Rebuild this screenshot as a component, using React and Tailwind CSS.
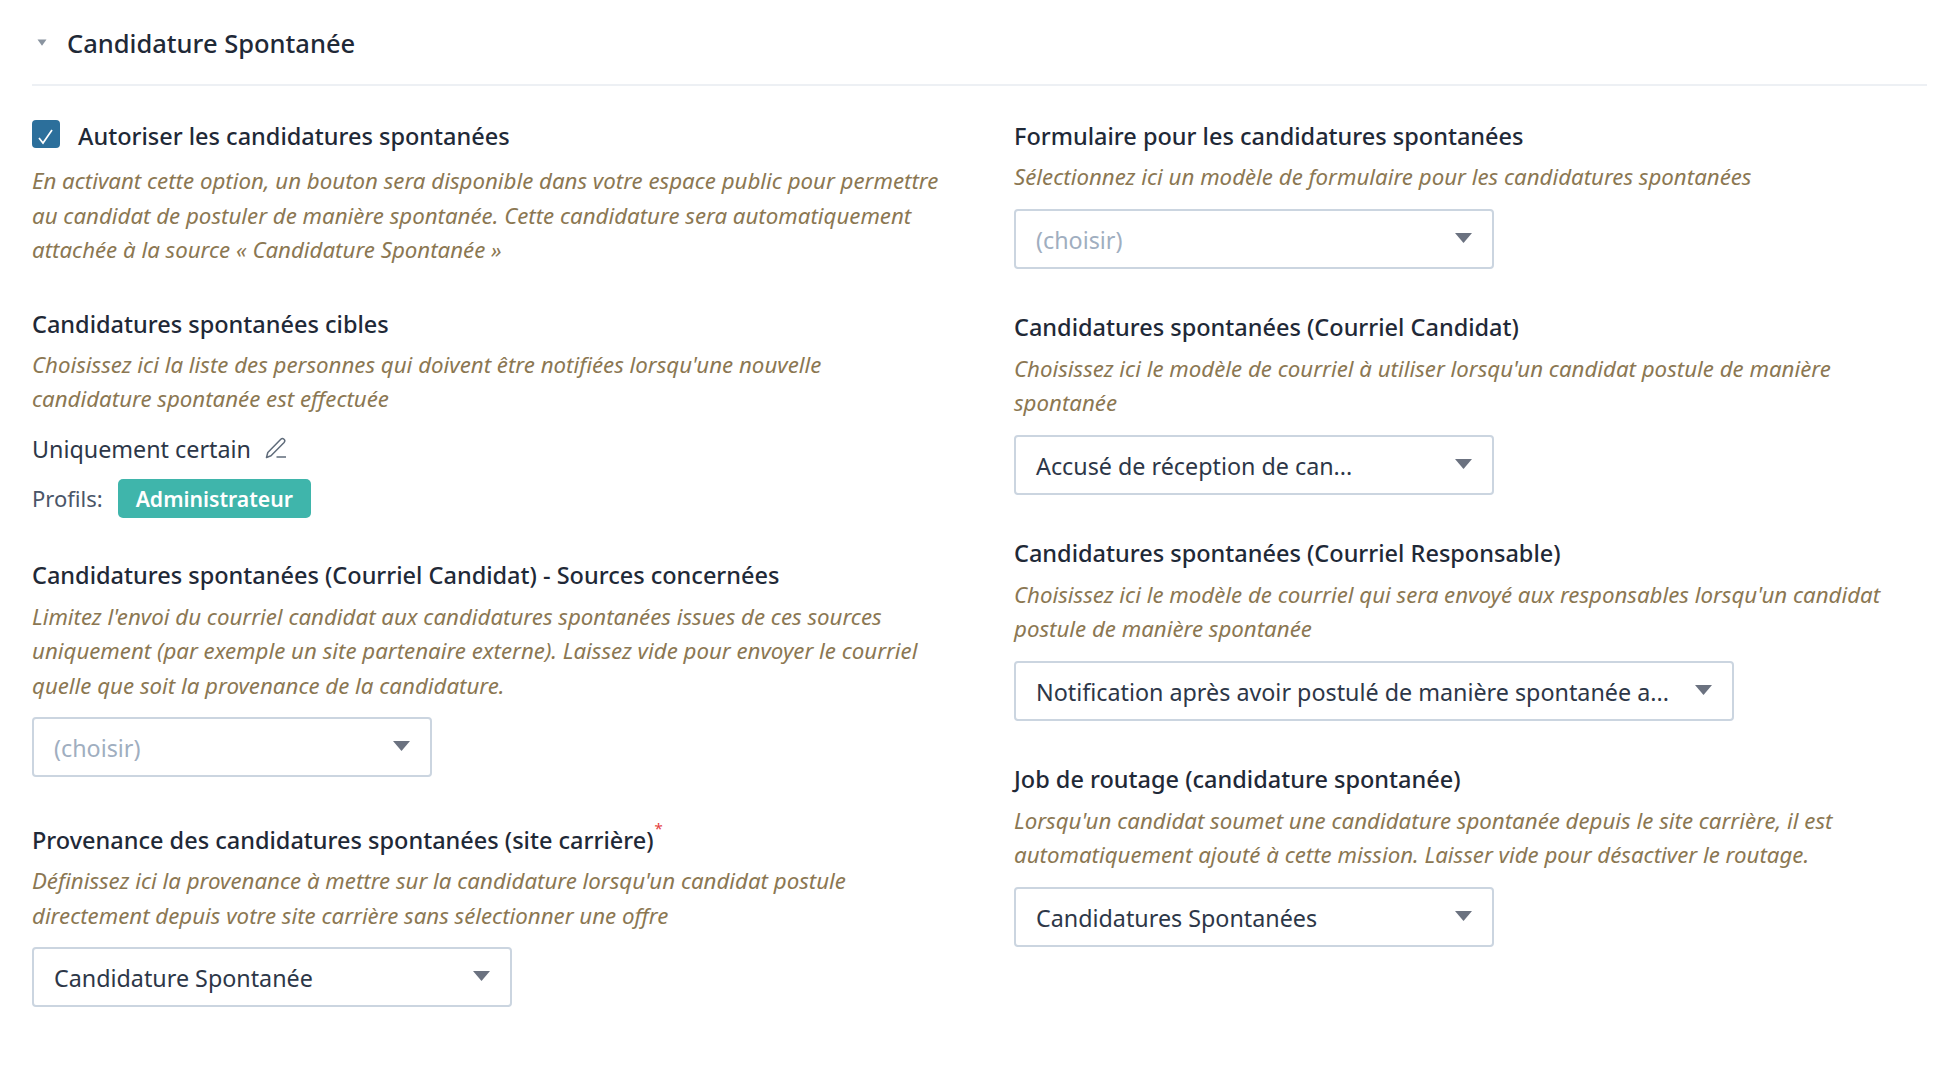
import React from "react";

function Field({ title, desc, required, descGap = "mt-[7px]", className = "", children }) {
  return (
    <div className={className}>
      <div className="text-[23.5px] leading-[34px] font-medium text-[#1f2937]">
        {title}
        {required && <sup className="ml-[1px] align-[8px] text-[15px] font-normal text-[#e53e3e]">*</sup>}
      </div>
      <p className={`${descGap} text-[22.25px] leading-[34.5px] italic text-[#8b7752]`}>{desc}</p>
      {children}
    </div>
  );
}

function Select({ value, placeholder, width }) {
  return (
    <div
      className={`mt-[14px] flex h-[60px] items-center justify-between rounded-[4px] border-2 border-[#cbd5e0] bg-white pl-[20px] pr-[18px] ${width}`}
    >
      <span className={`pt-[3px] text-[23.3px] ${placeholder ? "text-[#a0aec0]" : "text-[#2d3748]"}`}>{value}</span>
      <svg width="20" height="12" viewBox="0 0 20 12" className="mb-[2px] shrink-0">
        <path d="M1 1h17l-8.500 10z" fill="#6b7280" />
      </svg>
    </div>
  );
}

export default function App() {
  return (
    <div className="min-h-[1090px] bg-white pl-[32px] pr-[33px] font-['Noto_Sans','Open_Sans',sans-serif] text-[#1f2937]">
      <div className="flex h-[86px] items-center border-b-2 border-[#edf0f4]">
        <svg width="10" height="7" viewBox="0 0 10 7" className="ml-[5px] mr-[20px]">
          <path d="M0.500 0.500h9L5 6.800z" fill="#8a94a0" />
        </svg>
        <span className="pt-[2px] text-[25.5px] font-medium text-[#1f2937]">Candidature Spontanée</span>
      </div>
      <div className="grid grid-cols-2 gap-x-[69px] pt-[33px]">
        <div className="flex flex-col">
          <div>
            <div className="flex items-center">
              <span className="mb-[4px] flex h-[28px] w-[28px] items-center justify-center rounded-[4px] bg-[#2c6f9b]">
                <svg width="28" height="28" viewBox="0 0 28 28" fill="none" stroke="white" strokeWidth="1.700">
                  <path d="M7 18l4 5L20 10" />
                </svg>
              </span>
              <span className="ml-[18px] text-[23.5px] leading-[34px] font-medium">Autoriser les candidatures spontanées</span>
            </div>
            <p className="mt-[11px] text-[22.25px] leading-[34.5px] italic text-[#8b7752]">
              En activant cette option, un bouton sera disponible dans votre espace public pour permettre au candidat de postuler de manière spontanée. Cette candidature sera automatiquement attachée à la source « Candidature Spontanée »
            </p>
          </div>
          <Field
            className="mt-[39px]"
            title="Candidatures spontanées cibles"
            desc="Choisissez ici la liste des personnes qui doivent être notifiées lorsqu'une nouvelle candidature spontanée est effectuée"
          >
            <div className="mt-[12px] flex items-center text-[23.3px] leading-[40px] text-[#2d3748]">
              Uniquement certain
              <svg width="22" height="22" viewBox="0 0 22 22" fill="none" stroke="#5f6b7a" strokeWidth="1.500" className="ml-[14px] mb-[2px]">
                <path d="M1.500 20.500L2.800 15.500L15.800 2.200a2.300 2.300 0 0 1 3.300 3.200L6 18.800Z" strokeLinejoin="round" />
                <path d="M11.500 20h9.500" />
              </svg>
            </div>
            <div className="mt-[10px] flex items-center text-[22px] text-[#4a5568]">
              Profils:
              <span className="ml-[15px] flex h-[39px] items-center rounded-[5px] bg-[#3fb5ab] px-[18px] pt-[1px] text-[21.200px] font-semibold text-white">Administrateur</span>
            </div>
          </Field>
          <Field
            className="mt-[40px]"
            descGap="mt-[8px]"
            title="Candidatures spontanées (Courriel Candidat) - Sources concernées"
            desc="Limitez l'envoi du courriel candidat aux candidatures spontanées issues de ces sources uniquement (par exemple un site partenaire externe). Laissez vide pour envoyer le courriel quelle que soit la provenance de la candidature."
          >
            <Select value="(choisir)" placeholder width="w-[400px]" />
          </Field>
          <Field
            className="mt-[46px]"
            title="Provenance des candidatures spontanées (site carrière)"
            required
            desc="Définissez ici la provenance à mettre sur la candidature lorsqu'un candidat postule directement depuis votre site carrière sans sélectionner une offre"
          >
            <Select value="Candidature Spontanée" width="w-[480px]" />
          </Field>
        </div>
        <div className="flex flex-col gap-[41px]">
          <Field
            descGap="mt-[7px]"
            title="Formulaire pour les candidatures spontanées"
            desc="Sélectionnez ici un modèle de formulaire pour les candidatures spontanées"
          >
            <Select value="(choisir)" placeholder width="w-[480px]" />
          </Field>
          <Field
            descGap="mt-[8px]"
            title="Candidatures spontanées (Courriel Candidat)"
            desc="Choisissez ici le modèle de courriel à utiliser lorsqu'un candidat postule de manière spontanée"
          >
            <Select value="Accusé de réception de can..." width="w-[480px]" />
          </Field>
          <Field
            descGap="mt-[8px]"
            title="Candidatures spontanées (Courriel Responsable)"
            desc="Choisissez ici le modèle de courriel qui sera envoyé aux responsables lorsqu'un candidat postule de manière spontanée"
          >
            <Select value="Notification après avoir postulé de manière spontanée a..." width="w-[720px]" />
          </Field>
          <Field
            descGap="mt-[8px]"
            title="Job de routage (candidature spontanée)"
            desc="Lorsqu'un candidat soumet une candidature spontanée depuis le site carrière, il est automatiquement ajouté à cette mission. Laisser vide pour désactiver le routage."
          >
            <Select value="Candidatures Spontanées" width="w-[480px]" />
          </Field>
        </div>
      </div>
    </div>
  );
}
